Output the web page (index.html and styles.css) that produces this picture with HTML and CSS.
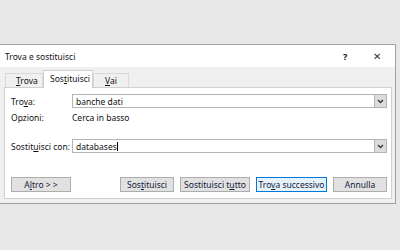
FILE: index.html
```html
<!DOCTYPE html>
<html lang="it">
<head>
    <meta charset="UTF-8">
    <title>Trova e sostituisci</title>
    <link rel="stylesheet" href="styles.css">
</head>
<body>
    <div class="top-gap"></div>
    <div class="dialog">
        <div class="titlebar">
            <span class="title">Trova e sostituisci</span>
            <span class="help">?</span>
            <span class="close">&#x2715;</span>
        </div>
        <div class="body">
            <div class="tabs">
                <div class="tab"><u>T</u>rova</div>
                <div class="tab active">Sos<u>t</u>ituisci</div>
                <div class="tab"><u>V</u>ai</div>
            </div>
            <div class="panel">
                <div class="row">
                    <label class="label">Tro<u>v</u>a:</label>
                    <div class="combo">
                        <span class="value">banche dati</span>
                        <span class="drop"><svg width="7" height="5" viewBox="0 0 7 5"><path d="M1 1 L3.5 3.5 L6 1" fill="none" stroke="#333" stroke-width="1.3"/></svg></span>
                    </div>
                </div>
                <div class="row opts">
                    <span class="label">Opzioni:</span>
                    <span class="value">Cerca in basso</span>
                </div>
                <div class="row repl">
                    <label class="label">Sostit<u>u</u>isci con:</label>
                    <div class="combo">
                        <span class="value">databases<span class="caret"></span></span>
                        <span class="drop"><svg width="7" height="5" viewBox="0 0 7 5"><path d="M1 1 L3.5 3.5 L6 1" fill="none" stroke="#333" stroke-width="1.3"/></svg></span>
                    </div>
                </div>
                <div class="buttons">
                    <button class="btn more">A<u>l</u>tro &gt; &gt;</button>
                    <div class="spacer"></div>
                    <button class="btn w-repl">Sos<u>t</u>ituisci</button>
                    <button class="btn w-all">Sostituisci t<u>u</u>tto</button>
                    <button class="btn w-next default">Tro<u>v</u>a successivo</button>
                    <button class="btn w-cancel">Annulla</button>
                </div>
            </div>
        </div>
    </div>
</body>
</html>
```

FILE: styles.css
```css
* {
    margin: 0;
    padding: 0;
    box-sizing: border-box;
}
body {
    width: 400px;
    height: 250px;
    background: #e8e8e8;
    font-family: "Noto Sans", "Open Sans", sans-serif;
    font-size: 8.5px;
    color: #111;
    overflow: hidden;
}
u {
    text-decoration: underline;
    text-underline-offset: 1px;
}
.top-gap {
    height: 44px;
}
.dialog {
    width: 396px;
    height: 160px;
    border-top: 1px solid #a0a0a0;
    border-bottom: 1px solid #a0a0a0;
    border-right: 1px solid #a0a0a0;
    background: #f0f0f0;
    display: flex;
    flex-direction: column;
}
.titlebar {
    height: 22px;
    background: #fff;
    display: flex;
    align-items: center;
    padding-left: 5px;
}
.title {
    flex: 1;
    font-size: 8.5px;
}
.help {
    width: 30px;
    font-weight: bold;
    font-size: 9px;
}
.close {
    width: 22px;
    font-size: 10px;
    color: #333;
}
.body {
    flex: 1;
    padding: 3px 3px 4px 4px;
    display: flex;
    flex-direction: column;
}
.tabs {
    display: flex;
    align-items: flex-end;
    height: 17px;
    padding-left: 1px;
}
.tab {
    height: 14px;
    line-height: 13px;
    padding: 0 9px 0 10px;
    border: 1px solid #d9d9d9;
    border-bottom: none;
    background: #f0f0f0;
    width: 38px;
}
.tab:last-child {
    width: 36px;
    padding-left: 11px;
}
.tab.active {
    height: 18px;
    line-height: 15px;
    width: 50px;
    padding: 0 6px;
    background: #fff;
    border-color: #d0d0d0;
    margin-bottom: -1px;
    position: relative;
    z-index: 1;
}
.panel {
    flex: 1;
    background: #fff;
    border: 1px solid #d0d0d0;
    padding: 6px 4px 5px 6px;
    display: flex;
    flex-direction: column;
}
.row {
    display: flex;
    align-items: center;
}
.label {
    width: 61px;
}
.combo {
    flex: 1;
    height: 14px;
    border: 1px solid #b4b4b4;
    display: flex;
    align-items: center;
    padding-left: 3px;
}
.combo .value {
    flex: 1;
}
.caret {
    display: inline-block;
    width: 1px;
    height: 9px;
    background: #000;
    vertical-align: -1px;
}
.drop {
    width: 12px;
    height: 12px;
    background: #dcdcdc;
    border-left: 1px solid #b4b4b4;
    display: flex;
    align-items: center;
    justify-content: center;
}
.opts {
    margin-top: 3px;
    height: 12px;
}
.repl {
    margin-top: 16px;
}
.buttons {
    margin-top: auto;
    display: flex;
    gap: 6px;
    margin-bottom: 1px;
}
.spacer {
    flex: 1;
}
.btn {
    height: 15px;
    font-family: inherit;
    font-size: 8.5px;
    color: #10203a;
    background: #e1e1e1;
    border: 1px solid #adadad;
}
.more {
    width: 60px;
}
.w-repl {
    width: 54px;
}
.w-all {
    width: 70px;
}
.w-next {
    width: 71px;
}
.w-cancel {
    width: 54px;
}
.btn.default {
    background: #e5f1fb;
    border-color: #0078d7;
}
```
